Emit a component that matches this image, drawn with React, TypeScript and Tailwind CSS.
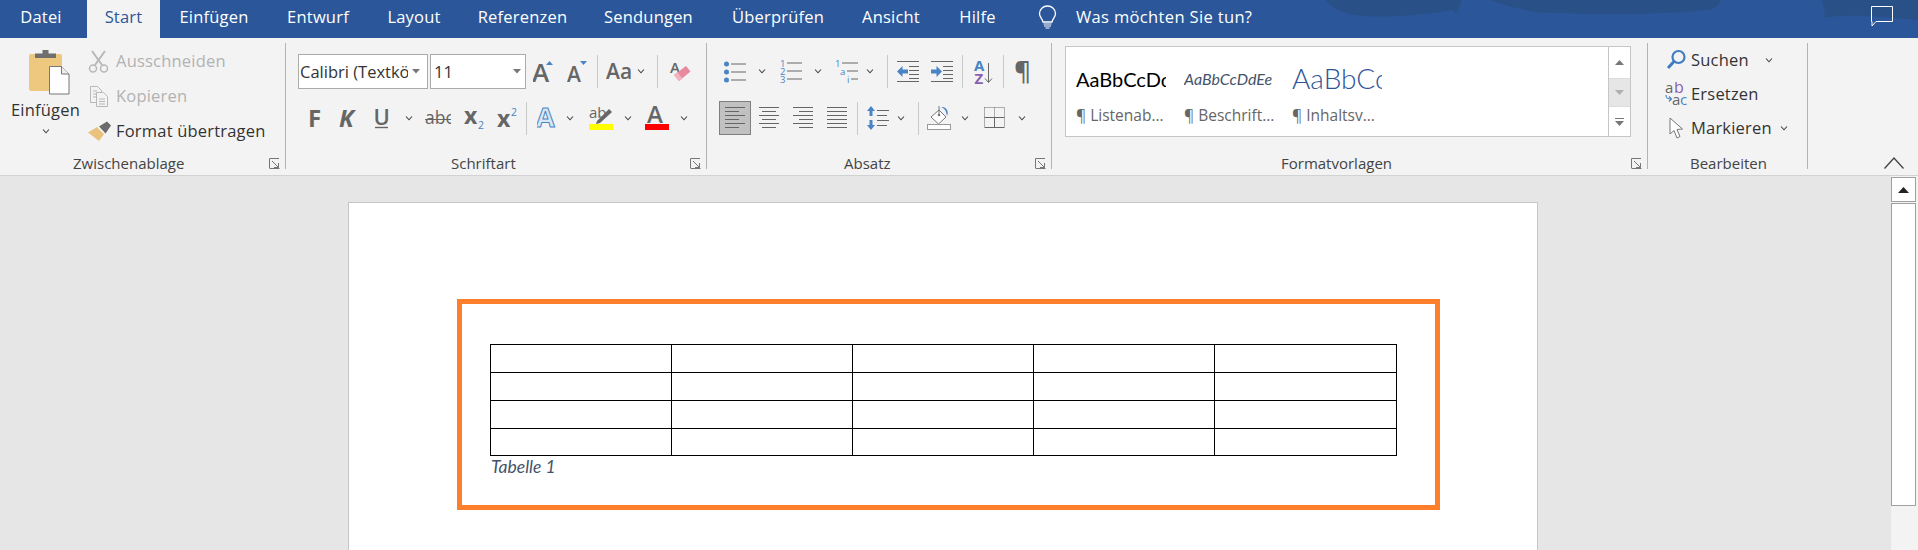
import React from "react";

const G = "#666666";
const B = "#4a84c4";
const P = "#8b5fb0";

type SP = { w: number; h: number; c?: string; children?: React.ReactNode };
const S = ({ w, h, c = "", children }: SP) => (
  <svg width={w} height={h} viewBox={`0 0 ${w} ${h}`} className={`shrink-0 ${c}`}>
    {children}
  </svg>
);
const Chev = ({ c = "" }: { c?: string }) => (
  <S w={8} h={5} c={c}>
    <path d="M1 .5 4 3.8 7 .5" fill="none" stroke="#444" strokeWidth="1.1" />
  </S>
);
const Sep = ({ c = "" }: { c?: string }) => <div className={`w-px h-[33px] shrink-0 bg-[#c9c9c9] ${c}`} />;
const GroupSep = () => <div className="w-px h-[126px] mt-[5px] shrink-0 bg-[#b4b4b4]" />;
const Launcher = () => (
  <S w={11} h={11} c="ml-auto mr-[5px]">
    <path d="M.5 10V.5H10M3 3l6.500 6.500M9.500 5v4.500H5M.5 10.500h10" fill="none" stroke="#777" strokeWidth="1" />
  </S>
);
const Lines = ({ ys, x1, x2, color = G }: { ys: number[]; x1: number[]; x2: number[]; color?: string }) => (
  <>
    {ys.map((y, i) => (
      <path key={i} d={`M${x1[i]} ${y}H${x2[i]}`} stroke={color} strokeWidth="1" />
    ))}
  </>
);
const Align = ({ x1, x2, c = "" }: { x1: number[]; x2: number[]; c?: string }) => (
  <S w={20} h={22} c={c}>
    <Lines ys={[0.5, 4.5, 8.5, 12.5, 16.5, 20.5]} x1={x1} x2={x2} />
  </S>
);

const Tab = ({ w, children }: { w: string; children: React.ReactNode }) => (
  <div className={`${w} h-full flex items-center justify-center text-white text-[16.5px] tracking-[0.2px] pb-[4px] whitespace-nowrap`}>{children}</div>
);

const Rows = ({ children }: { children: React.ReactNode }) => <div className="flex flex-col">{children}</div>;

export default function App() {
  return (
    <div className="relative w-[1918px] h-[550px] overflow-hidden font-['Open_Sans',sans-serif] bg-[#e6e6e6]">
      {/* title bar */}
      <header className="relative h-[38px] bg-[#2b579a] flex items-stretch">
        <svg className="absolute left-0 top-0" width={1918} height={38} viewBox="0 0 1918 38">
          <path d="M1325 0c8 8 18 15 40 16 28 2 64-2 88-6l3 4 6-14z" fill="#2a5088" />
          <path d="M1490 0c18 6 40 14 70 13 50 2 120 1 152-4 6-3 8-6 9-9z" fill="#2a5088" />
          <path d="M1821 0c4 8 5 13 2 18 20-4 50-2 95 2V0z" fill="#2a5088" />
        </svg>
        <div className="relative flex h-full items-stretch">
          <div className="w-[87px] pr-[5px] h-full flex items-center justify-center text-white text-[16.5px] tracking-[0.2px] pb-[4px]">Datei</div>
          <div className="w-[73px] h-full flex items-center justify-center text-[#2b579a] text-[16.5px] tracking-[0.2px] pb-[4px] bg-[#f3f3f3]">Start</div>
          <Tab w="w-[108px]">Einfügen</Tab>
          <Tab w="w-[100px]">Entwurf</Tab>
          <Tab w="w-[92px]">Layout</Tab>
          <Tab w="w-[125px]">Referenzen</Tab>
          <Tab w="w-[127px]">Sendungen</Tab>
          <Tab w="w-[132px]">Überprüfen</Tab>
          <Tab w="w-[94px]">Ansicht</Tab>
          <Tab w="w-[79px]">Hilfe</Tab>
          <div className="flex items-center pb-[4px] ml-[21px] text-white text-[16.5px] tracking-[0.35px]">
            <S w={19} h={24}>
              <path d="M9.500 1C5 1 1.500 4.400 1.500 8.500c0 3.600 2.800 5 3.500 8.500h9c.7-3.500 3.500-4.900 3.500-8.500C17.500 4.400 14 1 9.500 1Z" fill="none" stroke="#fff" strokeWidth="1.300" />
              <path d="M5.500 19h8M6 21h7M7.500 23h4" stroke="#fff" strokeWidth="1.200" />
            </S>
            <span className="ml-[19px]">Was möchten Sie tun?</span>
          </div>
        </div>
        <S w={24} h={21} c="absolute right-[24px] top-[6px]">
          <path d="M1.500.5h21v15H6l-4 4.500v-4.500H1.500z" fill="none" stroke="#fff" strokeWidth="1" />
        </S>
      </header>

      {/* ribbon */}
      <div className="h-[138px] bg-[#f3f3f3] border-b border-[#d2d2d2] flex items-start text-[#444]">
        {/* Zwischenablage */}
        <section className="w-[285px] shrink-0 flex flex-col">
          <div className="h-[117px] flex">
            <div className="w-[88px] flex flex-col items-center">
              <S w={42} h={46} c="mt-[11px] ml-[10px]">
                <rect x="1" y="5" width="33" height="37" rx="2" fill="#edc87e" />
                <path d="M7 9V4.500h7.500V1h6v3.500H28V9z" fill="#6f6f6f" />
                <path d="M21.500 17.500h12l7.500 7.500v20H21.500z" fill="#fff" stroke="#777" strokeWidth="1" />
                <path d="M33.500 17.500V25H41" fill="#eee" stroke="#777" strokeWidth="1" />
              </S>
              <span className="text-[16.5px] tracking-[0.2px] leading-[20px] mt-[5px] ml-[3px] text-[#333]">Einfügen</span>
              <Chev c="mt-[9px] ml-[3px]" />
            </div>
            <div className="flex flex-col pt-[6px] whitespace-nowrap">
              <div className="h-[35px] flex items-center text-[16.5px] tracking-[0.2px] text-[#b2b2b2]">
                <S w={21} h={23} c="mr-[7px]">
                  <g fill="none" stroke="#b8b8b8" strokeWidth="2">
                    <path d="M4 1l10 14M17 1 7 15" />
                    <circle cx="5" cy="18.500" r="3.500" strokeWidth="1.500" />
                    <circle cx="16" cy="18.500" r="3.500" strokeWidth="1.500" />
                  </g>
                </S>
                Ausschneiden
              </div>
              <div className="h-[35px] flex items-center text-[16.5px] tracking-[0.2px] text-[#b2b2b2]">
                <S w={21} h={23} c="mr-[7px]">
                  <g fill="#f3f3f3" stroke="#b8b8b8" strokeWidth="1">
                    <path d="M2.500 1.500h7l4 4v12h-11z" />
                    <path d="M8.500 7.500h7l4 4v10h-11z" />
                  </g>
                  <path d="M5 6h4M5 9h3M5 12h3M11 14h6M11 16.500h6M11 19h6" stroke="#b8b8b8" strokeWidth="1" />
                </S>
                Kopieren
              </div>
              <div className="h-[35px] flex items-center text-[16.5px] tracking-[0.2px] text-[#333]">
                <S w={24} h={21} c="mr-[4px]">
                  <path d="M0 11.500 9 6l7 7-5 7z" fill="#e9c27c" />
                  <path d="M11 5.500l8-5 4 4-5.500 8z" fill="#6b6b6b" />
                  <path d="M10.500 6.500l5 5" stroke="#f3f3f3" strokeWidth="1.200" />
                </S>
                Format übertragen
              </div>
            </div>
          </div>
          <div className="h-[16px] flex items-center text-[15px]">
            <span className="ml-[73px]">Zwischenablage</span>
            <Launcher />
          </div>
        </section>
        <GroupSep />

        {/* Schriftart */}
        <section className="w-[420px] shrink-0 flex flex-col">
          <div className="h-[117px]">
            <Rows>
              <div className="h-[35px] mt-[16px] flex items-center">
                <div className="ml-[12px] w-[130px] h-[35px] bg-white border border-[#ababab] flex items-center text-[16.5px] text-[#333] pl-[1px] pt-[2px]">
                  <span className="w-[108px] overflow-hidden whitespace-nowrap">Calibri (Textkörper)</span>
                  <S w={8} h={5} c="ml-[4px] mb-[2px]"><path d="M0 0h8L4 4.500z" fill="#777" /></S>
                </div>
                <div className="ml-[2px] w-[96px] h-[35px] bg-white border border-[#ababab] flex items-center text-[16.5px] text-[#333] pl-[3px] pt-[2px]">
                  <span>11</span>
                  <S w={8} h={5} c="ml-auto mr-[4px] mb-[2px]"><path d="M0 0h8L4 4.500z" fill="#777" /></S>
                </div>
                <S w={22} h={22} c="ml-[7px]">
                  <text x="-1" y="21" fontSize="26" fontWeight="600" fill={G}>A</text>
                  <path d="M13 4h7l-3.500-4z" fill={B} />
                </S>
                <S w={21} h={22} c="ml-[12px]">
                  <text x="0" y="21" fontSize="21" fontWeight="600" fill={G}>A</text>
                  <path d="M13 0h7l-3.500 4z" fill={B} />
                </S>
                <Sep c="ml-[9px]" />
                <S w={28} h={22} c="ml-[8px]">
                  <text x="0" y="18" fontSize="21" fontWeight="600" fill={G}>Aa</text>
                </S>
                <Chev c="ml-[3px]" />
                <Sep c="ml-[12px]" />
                <S w={22} h={24} c="ml-[11px]">
                  <text x="1" y="13" fontSize="15" fontWeight="600" fill={G}>A</text>
                  <path d="M5 15l12-9 4.500 5.500L10 21z" fill="#e98a9c" />
                  <path d="M10 21l-5-6 3.500-2.500 5 6z" fill="#f0b4c0" />
                </S>
              </div>
              <div className="h-[34px] mt-[12px] flex items-center">
                <S w={16} h={22} c="ml-[20px]"><text x="2" y="20" fontSize="24" fontWeight="700" fill={G}>F</text></S>
                <S w={17} h={22} c="ml-[17px]"><text x="0" y="20" fontSize="24" fontWeight="700" fontStyle="italic" fill={G}>K</text></S>
                <S w={17} h={22} c="ml-[17px]">
                  <text x="0.500" y="17.500" fontSize="22" fontWeight="600" fill={G}>U</text>
                  <path d="M2 20.500h13" stroke={G} strokeWidth="1.400" />
                </S>
                <Chev c="ml-[15px]" />
                <S w={26} h={22} c="ml-[12px]">
                  <text x="0" y="17" fontSize="17.500" fill={G}>abc</text>
                  <path d="M0 12.500h26" stroke={G} strokeWidth="1" />
                </S>
                <S w={21} h={22} c="ml-[13px]">
                  <text x="0" y="17" fontSize="23" fontWeight="700" fill={G}>x</text>
                  <text x="14" y="22" fontSize="10.500" fill={B}>2</text>
                </S>
                <S w={21} h={22} c="ml-[12px]">
                  <text x="0" y="20" fontSize="23" fontWeight="700" fill={G}>x</text>
                  <text x="14" y="9" fontSize="10.500" fill={B}>2</text>
                </S>
                <Sep c="ml-[8px]" />
                <S w={20} h={24} c="ml-[10px]">
                  <text x="-1" y="21" fontSize="27" fontWeight="700" fill="#d9e8f7" stroke={B} strokeWidth="1">A</text>
                </S>
                <Chev c="ml-[9px]" />
                <S w={24} h={24} c="ml-[15px]">
                  <text x="0" y="12" fontSize="15" fill={G}>ab</text>
                  <path d="M8 15 20 3l3 3-12 11-4 1z" fill={G} />
                  <rect y="18" width="24" height="6" fill="#ffff00" />
                </S>
                <Chev c="ml-[11px]" />
                <S w={24} h={24} c="ml-[13px]">
                  <text x="2" y="17" fontSize="24" fontWeight="600" fill={G}>A</text>
                  <rect y="18" width="24" height="6" fill="#ff0000" />
                </S>
                <Chev c="ml-[11px]" />
              </div>
            </Rows>
          </div>
          <div className="h-[16px] flex items-center text-[15px]">
            <span className="ml-[165px]">Schriftart</span>
            <Launcher />
          </div>
        </section>
        <GroupSep />

        {/* Absatz */}
        <section className="w-[344px] shrink-0 flex flex-col">
          <div className="h-[117px]">
            <Rows>
              <div className="h-[35px] mt-[16px] flex items-center">
                <S w={22} h={22} c="ml-[17px]">
                  <g fill={B}><circle cx="2.500" cy="3" r="2.500" /><circle cx="2.500" cy="11" r="2.500" /><circle cx="2.500" cy="19" r="2.500" /></g>
                  <Lines ys={[3, 11, 19]} x1={[7, 7, 7]} x2={[22, 22, 22]} />
                </S>
                <Chev c="ml-[12px]" />
                <S w={22} h={23} c="ml-[14px]">
                  <g fontSize="9.500" fill={B}><text x="0" y="7">1</text><text x="0" y="15">2</text><text x="0" y="23">3</text></g>
                  <Lines ys={[3, 11, 19]} x1={[7, 7, 7]} x2={[22, 22, 22]} />
                </S>
                <Chev c="ml-[12px]" />
                <S w={23} h={23} c="ml-[13px]">
                  <g fontSize="9.500" fill={B}><text x="0" y="7">1</text><text x="5" y="15">a</text><text x="12" y="23">i</text></g>
                  <Lines ys={[3, 11, 19]} x1={[7, 12, 16]} x2={[23, 23, 23]} />
                </S>
                <Chev c="ml-[8px]" />
                <Sep c="ml-[13px]" />
                <S w={22} h={22} c="ml-[9px]">
                  <Lines ys={[0.5, 5.5, 9.5, 13.500, 17.500, 20.5]} x1={[0, 12, 12, 12, 12, 0]} x2={[22, 22, 22, 22, 22, 22]} />
                  <path d="M0 10.500 5.500 5v3.500H11v4H5.500V16z" fill={B} />
                </S>
                <S w={22} h={22} c="ml-[12px]">
                  <Lines ys={[0.5, 5.5, 9.5, 13.500, 17.500, 20.5]} x1={[0, 12, 12, 12, 12, 0]} x2={[22, 22, 22, 22, 22, 22]} />
                  <path d="M11 10.500 5.500 5v3.500H0v4h5.500V16z" fill={B} />
                </S>
                <Sep c="ml-[9px]" />
                <S w={19} h={24} c="ml-[11px]">
                  <text x="0" y="11" fontSize="15" fontWeight="700" fill={B}>A</text>
                  <text x="0.500" y="24" fontSize="15" fontWeight="700" fill={P}>Z</text>
                  <path d="M14.500 3v19M11 18.500l3.500 4 3.500-4" fill="none" stroke={G} strokeWidth="1" />
                </S>
                <Sep c="ml-[10px]" />
                <S w={18} h={24} c="ml-[10px]">
                  <text x="0" y="20" fontSize="26" fontWeight="600" fill={G}>¶</text>
                </S>
              </div>
              <div className="h-[34px] mt-[12px] flex items-center">
                <div className="ml-[12px] w-[32px] h-[34px] bg-[#c1c1c1] border border-[#7f7f7f] flex items-center justify-center">
                  <Align x1={[0, 0, 0, 0, 0, 0]} x2={[20, 14, 20, 14, 20, 14]} />
                </div>
                <Align c="ml-[8px]" x1={[0, 3, 0, 3, 0, 3]} x2={[20, 17, 20, 17, 20, 17]} />
                <Align c="ml-[14px]" x1={[0, 6, 0, 6, 0, 6]} x2={[20, 20, 20, 20, 20, 20]} />
                <Align c="ml-[14px]" x1={[0, 0, 0, 0, 0, 0]} x2={[20, 20, 20, 20, 20, 20]} />
                <Sep c="ml-[10px]" />
                <S w={22} h={24} c="ml-[9px]">
                  <path d="M4 0 8 5H5.500v5h-3V5H0zM4 24l4-5H5.500v-5h-3v5H0z" fill={B} />
                  <Lines ys={[4.5, 9.5, 14.5, 19.5]} x1={[10, 10, 10, 10]} x2={[22, 20, 22, 20]} />
                </S>
                <Chev c="ml-[8px]" />
                <Sep c="ml-[13px]" />
                <S w={24} h={24} c="ml-[8px]">
                  <path d="M12 4 4 11l7.500 7L19 11z" fill="#fff" stroke="#777" strokeWidth="1" />
                  <path d="M12 0v9" stroke="#777" strokeWidth="1" /><circle cx="12" cy="9" r="1.300" fill="#777" />
                  <path d="M14 1h2c4 1 6 5 4 9l-1-4c-1-3-3-4-5-5Z" fill={B} />
                  <rect x=".5" y="18.500" width="23" height="5" fill="#fff" stroke="#999" strokeWidth="1" />
                </S>
                <Chev c="ml-[10px]" />
                <S w={21} h={22} c="ml-[15px]">
                  <path d="M.5.5h20M.5.5v20M20.500.5v20M10.500.5V10" fill="none" stroke="#666" strokeWidth="1" strokeDasharray="1 1" />
                  <path d="M.5 10.500h20M10.500 10.500v10M.5 20.500h20" fill="none" stroke="#666" strokeWidth="1" />
                </S>
                <Chev c="ml-[13px]" />
              </div>
            </Rows>
          </div>
          <div className="h-[16px] flex items-center text-[15px]">
            <span className="ml-[137px]">Absatz</span>
            <Launcher />
          </div>
        </section>
        <GroupSep />

        {/* Formatvorlagen */}
        <section className="w-[595px] shrink-0 flex flex-col">
          <div className="h-[117px] pt-[8px] pl-[13px]">
            <div className="w-[566px] h-[91px] bg-white border border-[#c6c6c6] flex">
              <div className="flex-1 flex pl-[10px] gap-[18px]">
                <div className="w-[90px] overflow-hidden whitespace-nowrap">
                  <div className="h-[58px] flex items-center pt-[6px] text-[20px] text-black font-['Lato',sans-serif]">AaBbCcDdEe</div>
                  <div className="text-[15.5px] leading-[20px] text-[#666]">¶ Listenab...</div>
                </div>
                <div className="w-[90px] overflow-hidden whitespace-nowrap">
                  <div className="h-[58px] flex items-center pt-[6px] text-[16px] italic text-[#44546a] font-['Lato',sans-serif]">AaBbCcDdEe</div>
                  <div className="text-[15.5px] leading-[20px] text-[#666]">¶ Beschrift...</div>
                </div>
                <div className="w-[90px] overflow-hidden whitespace-nowrap">
                  <div className="h-[58px] flex items-center pt-[4px] text-[28px] font-light text-[#2f5597] font-['Lato',sans-serif]">AaBbCcDdEe</div>
                  <div className="text-[15.5px] leading-[20px] text-[#666]">¶ Inhaltsv...</div>
                </div>
              </div>
              <div className="w-[22px] flex flex-col border-l border-[#c6c6c6]">
                <div className="h-[31px] flex items-center justify-center">
                  <S w={9} h={5}><path d="M0 5h9L4.500 0z" fill="#777" /></S>
                </div>
                <div className="h-[29px] bg-[#e6e6e6] flex items-center justify-center border-y border-[#dcdcdc]">
                  <S w={9} h={5}><path d="M0 0h9L4.500 5z" fill="#b0b0b0" /></S>
                </div>
                <div className="flex-1 flex flex-col items-center justify-center gap-[2px]">
                  <div className="w-[9px] h-px bg-[#777]" />
                  <S w={9} h={5}><path d="M0 0h9L4.500 5z" fill="#777" /></S>
                </div>
              </div>
            </div>
          </div>
          <div className="h-[16px] flex items-center text-[15px]">
            <span className="ml-[229px]">Formatvorlagen</span>
            <Launcher />
          </div>
        </section>
        <GroupSep />

        {/* Bearbeiten */}
        <section className="w-[159px] shrink-0 flex flex-col">
          <div className="h-[117px] pt-[5px] text-[16.5px] tracking-[0.2px] text-[#333]">
            <div className="h-[34px] flex items-center pl-[17px]">
              <S w={22} h={22} c="mr-[4px]">
                <circle cx="13.500" cy="8" r="6" fill="none" stroke="#3f7cc0" strokeWidth="2.200" />
                <path d="M9 12.500 3 19" stroke="#3f7cc0" strokeWidth="3" />
              </S>
              Suchen
              <Chev c="ml-[16px]" />
            </div>
            <div className="h-[34px] flex items-center pl-[17px]">
              <S w={23} h={24} c="mr-[3px]">
                <text x="0" y="11" fontSize="15" fill={G}>a</text>
                <text x="9" y="11" fontSize="16" fill={P}>b</text>
                <text x="7" y="23" fontSize="15" fill={G}>a</text>
                <text x="15" y="23" fontSize="15" fill={B}>c</text>
                <path d="M1 13c0 3 1 4 5 4M4 14.500 6.500 17 4 19.500" fill="none" stroke={B} strokeWidth="1.200" />
              </S>
              Ersetzen
            </div>
            <div className="h-[34px] flex items-center pl-[21px]">
              <S w={15} h={23} c="mr-[7px]">
                <path d="M1 1v16l4-3.500 3 7.500 3-1.500-3-7 5.500-.5z" fill="#fff" stroke="#777" strokeWidth="1" />
              </S>
              Markieren
              <Chev c="ml-[8px]" />
            </div>
          </div>
          <div className="h-[16px] flex items-center text-[15px]">
            <span className="ml-[42px]">Bearbeiten</span>
          </div>
        </section>
        <GroupSep />

        <div className="flex-1 flex justify-end items-start pt-[119px] pr-[14px]">
          <S w={20} h={12}>
            <path d="M.5 11.500 10 1l9.500 10.500" fill="none" stroke="#444" strokeWidth="1.300" />
          </S>
        </div>
      </div>

      {/* document area */}
      <main className="flex h-[374px]">
        <div className="w-[1891px] shrink-0 pl-[348px] pt-[26px]">
          <div className="w-[1190px] h-[400px] bg-white border border-[#c6c6c6] pl-[108px] pt-[96px]">
            <div className="w-[983px] h-[211px] border-[5px] border-[#fe7f2b] pl-[28px] pt-[40px]">
              <table className="border-collapse table-fixed w-[907px]">
                <tbody>
                  {[0, 1, 2, 3].map((r) => (
                    <tr key={r} className={r === 3 ? "h-[27px]" : "h-[28px]"}>
                      <td className="border border-black w-[181px]" />
                      <td className="border border-black w-[181px]" />
                      <td className="border border-black w-[181px]" />
                      <td className="border border-black w-[181px]" />
                      <td className="border border-black" />
                    </tr>
                  ))}
                </tbody>
              </table>
              <p className="mt-[1px] ml-[1px] text-[17.5px] leading-[20px] italic text-[#44546a] font-['Lato',sans-serif]">Tabelle 1</p>
            </div>
          </div>
        </div>
        <aside className="flex-1 bg-[#f3f3f3] flex flex-col">
          <div className="w-[25px] h-[25px] mt-[1px] bg-white border border-[#a0a0a0] flex items-center justify-center">
            <S w={11} h={6}><path d="M0 6h11L5.500 0z" fill="#222" /></S>
          </div>
          <div className="w-[25px] h-[303px] mt-[1px] bg-white border border-[#a0a0a0]" />
        </aside>
      </main>
    </div>
  );
}
